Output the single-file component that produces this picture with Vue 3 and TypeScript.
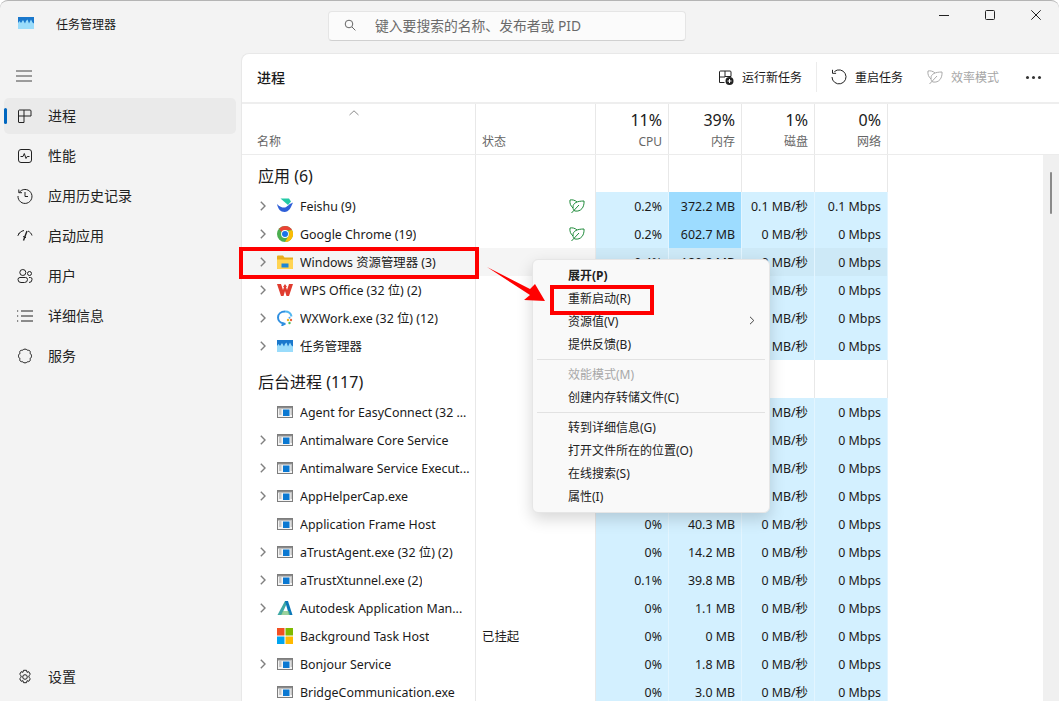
<script setup lang="ts">
interface Row { name: string; exp: boolean; icon: string; status?: string; leaf?: boolean; cpu: string; mem: string; disk: string; net: string; hot?: boolean; hover?: boolean }
const apps: Row[] = [
  { name: 'Feishu (9)', exp: true, icon: 'feishu', leaf: true, cpu: '0.2%', mem: '372.2 MB', disk: '0.1 MB/秒', net: '0.1 Mbps', hot: true },
  { name: 'Google Chrome (19)', exp: true, icon: 'chrome', leaf: true, cpu: '0.2%', mem: '602.7 MB', disk: '0 MB/秒', net: '0 Mbps', hot: true },
  { name: 'Windows 资源管理器 (3)', exp: true, icon: 'folder', cpu: '0.4%', mem: '189.8 MB', disk: '0 MB/秒', net: '0 Mbps', hover: true },
  { name: 'WPS Office (32 位) (2)', exp: true, icon: 'wps', cpu: '', mem: '', disk: '0 MB/秒', net: '0 Mbps' },
  { name: 'WXWork.exe (32 位) (12)', exp: true, icon: 'wx', cpu: '', mem: '', disk: '0 MB/秒', net: '0 Mbps' },
  { name: '任务管理器', exp: true, icon: 'tm', cpu: '', mem: '', disk: '0 MB/秒', net: '0 Mbps' },
]
const bg: Row[] = [
  { name: 'Agent for EasyConnect (32 ...', exp: false, icon: 'app', cpu: '', mem: '', disk: '0 MB/秒', net: '0 Mbps' },
  { name: 'Antimalware Core Service', exp: true, icon: 'app', cpu: '', mem: '', disk: '0 MB/秒', net: '0 Mbps' },
  { name: 'Antimalware Service Execut...', exp: true, icon: 'app', cpu: '', mem: '', disk: '0 MB/秒', net: '0 Mbps' },
  { name: 'AppHelperCap.exe', exp: true, icon: 'app', cpu: '', mem: '', disk: '0 MB/秒', net: '0 Mbps' },
  { name: 'Application Frame Host', exp: false, icon: 'app', cpu: '0%', mem: '40.3 MB', disk: '0 MB/秒', net: '0 Mbps' },
  { name: 'aTrustAgent.exe (32 位) (2)', exp: true, icon: 'app', cpu: '0%', mem: '14.2 MB', disk: '0 MB/秒', net: '0 Mbps' },
  { name: 'aTrustXtunnel.exe (2)', exp: true, icon: 'app', cpu: '0.1%', mem: '39.8 MB', disk: '0 MB/秒', net: '0 Mbps' },
  { name: 'Autodesk Application Man...', exp: true, icon: 'autodesk', cpu: '0%', mem: '1.1 MB', disk: '0 MB/秒', net: '0 Mbps' },
  { name: 'Background Task Host', exp: false, icon: 'ms', status: '已挂起', cpu: '0%', mem: '0 MB', disk: '0 MB/秒', net: '0 Mbps' },
  { name: 'Bonjour Service', exp: true, icon: 'app', cpu: '0%', mem: '1.8 MB', disk: '0 MB/秒', net: '0 Mbps' },
  { name: 'BridgeCommunication.exe', exp: false, icon: 'app', cpu: '0%', mem: '3.0 MB', disk: '0 MB/秒', net: '0 Mbps' },
]
const groups = [
  { title: '应用 (6)', rows: apps },
  { title: '后台进程 (117)', rows: bg },
]
const nav = [
  { id: 'proc', label: '进程', active: true },
  { id: 'perf', label: '性能' },
  { id: 'hist', label: '应用历史记录' },
  { id: 'boot', label: '启动应用' },
  { id: 'user', label: '用户' },
  { id: 'detail', label: '详细信息' },
  { id: 'svc', label: '服务' },
]
const heads = [
  { pct: '11%', label: 'CPU' },
  { pct: '39%', label: '内存' },
  { pct: '1%', label: '磁盘' },
  { pct: '0%', label: '网络' },
]
const menu = [
  [{ t: '展开(P)', bold: true }, { t: '重新启动(R)' }, { t: '资源值(V)', sub: true }, { t: '提供反馈(B)' }],
  [{ t: '效能模式(M)', off: true }, { t: '创建内存转储文件(C)' }],
  [{ t: '转到详细信息(G)' }, { t: '打开文件所在的位置(O)' }, { t: '在线搜索(S)' }, { t: '属性(I)' }],
]
</script>

<template>
  <div class="win">
    <header class="titlebar">
      <div class="brand">
        <svg class="tm-logo" width="16" height="12" viewBox="0 0 16 12">
          <rect width="16" height="12" fill="#9adcfb" />
          <path d="M0 0h16v6.500l-1.500-1-1.500-3-2 4-1.500-4-1.500 1.500L7 6.500 5 3 3 6 1.500 4 0 6z" fill="#1a78cc" />
        </svg>
        <span class="app-name">任务管理器</span>
      </div>
      <div class="search">
        <svg width="12" height="12" viewBox="0 0 12 12" fill="none" stroke="#666" stroke-width="1"><circle cx="5" cy="5" r="3.800" /><path d="M8 8l3.400 3.400" /></svg>
        <span>键入要搜索的名称、发布者或 PID</span>
      </div>
      <div class="winbtns">
        <svg width="10" height="10" viewBox="0 0 10 10" stroke="#222" fill="none"><path d="M0 5.500h10" /></svg>
        <svg width="10" height="10" viewBox="0 0 10 10" stroke="#222" fill="none"><rect x=".5" y=".5" width="9" height="9" rx="1" /></svg>
        <svg width="10" height="10" viewBox="0 0 10 10" stroke="#222" fill="none"><path d="M.3.3l9.400 9.400M9.700.3L.3 9.700" /></svg>
      </div>
    </header>

    <div class="body">
      <aside class="side">
        <button class="ham"><svg width="16" height="12" viewBox="0 0 16 12" stroke="#444" fill="none"><path d="M0 1h16M0 6h16M0 11h16" /></svg></button>
        <nav class="nav">
          <div v-for="n in nav" :key="n.id" class="nav-item" :class="{ active: n.active }">
            <i v-if="n.active" class="pip"></i>
            <svg class="nav-ico" width="16" height="16" viewBox="0 0 16 16" fill="none" stroke="#222" stroke-width="1">
              <template v-if="n.id === 'proc'">
                <path d="M1.500 8V14a.5.5 0 0 0 .5.5H7V2H2.500a1 1 0 0 0-1 1V8H14V3a1 1 0 0 0-1-1H7" />
              </template>
              <template v-else-if="n.id === 'perf'">
                <rect x="1.500" y="1.500" width="13" height="13" rx="2.500" /><path d="M3.500 8.500H6l1.300-3 1.700 5 1.200-2H12.500" />
              </template>
              <template v-else-if="n.id === 'hist'">
                <path d="M2.200 4.500A7 7 0 1 1 1 8" /><path d="M1.800 1.500v3.200H5M8 4v4.500h3" />
              </template>
              <template v-else-if="n.id === 'boot'">
                <path d="M1 7.500C2 5 4 3 7 2.500M11 3c2 1 3.500 2.500 4 4.500M1 7.500l1.500-2.800" /><path d="M6.500 12.500L10 3" stroke-width="1.400" /><path d="M6 8.500l3 1.200" />
              </template>
              <template v-else-if="n.id === 'user'">
                <circle cx="5.800" cy="4.500" r="3" /><circle cx="12.500" cy="5.500" r="2" /><path d="M1 11.500a2 2 0 0 1 2-2h5.500a2 2 0 0 1 2 2v0a3 3 0 0 1-3 3H4a3 3 0 0 1-3-3zM12 9.500h1.500a1.500 1.500 0 0 1 1.500 1.500v.5a3 3 0 0 1-3 3" />
              </template>
              <template v-else-if="n.id === 'detail'">
                <path d="M4 3h12M4 8h12M4 13h12" /><path d="M.5 2.500v1M.5 7.500v1M.5 12.500v1" stroke-width="1.400" />
              </template>
              <template v-else>
                <path d="M6 2C6.500.8 9.500.8 10 2C11 2.500 12.500 2 13 3C13.500 4 13.200 5 13 5.500C15 6 15 10 13 10.500C13.200 11 13.500 12 13 13C12.500 14 11 13.500 10 14C9.500 15.200 6.500 15.200 6 14C5 13.500 3.500 14 3 13C2.500 12 2.800 11 3 10.500C1 10 1 6 3 5.500C2.800 5 2.500 4 3 3C3.500 2 5 2.500 6 2Z" />
              </template>
            </svg>
            <span>{{ n.label }}</span>
          </div>
        </nav>
        <div class="nav-item settings">
          <svg class="nav-ico" width="16" height="16" viewBox="0 0 16 16" fill="none" stroke="#222"><circle cx="8" cy="8" r="2.300" /><path d="M6.500 1.300h3l.5 2 1.800-.6 1.500 2.600-1.400 1.400v1.600l1.400 1.400-1.500 2.600-1.800-.6-.5 2h-3l-.5-2-1.800.6-1.500-2.600 1.400-1.400V6.700L2.700 5.300l1.500-2.600 1.800.6z" /></svg>
          <span>设置</span>
        </div>
      </aside>

      <main class="panel">
        <div class="toolbar">
          <h1>进程</h1>
          <div class="tools">
            <div class="tool">
              <svg width="16" height="16" viewBox="0 0 16 16" fill="none" stroke="#222"><path d="M1.500 8V13.500H6.500M1.500 8V3a1 1 0 0 1 1-1H7V8H1.500M7 2h5a1 1 0 0 1 1 1v4.500H7" /><circle cx="11.500" cy="12" r="4" fill="#222" stroke="none" /><path d="M11.500 10v4M9.500 12h4" stroke="#fff" /></svg>
              <span>运行新任务</span>
            </div>
            <i class="tsep"></i>
            <div class="tool">
              <svg width="16" height="16" viewBox="0 0 16 16" fill="none" stroke="#222"><path d="M3.400 2.600A7 7 0 1 1 1 8" /><path d="M1.500.8v3.500h3.600" /></svg>
              <span>重启任务</span>
            </div>
            <div class="tool off">
              <svg width="16" height="16" viewBox="0 0 16 16" fill="none" stroke="#aaa"><path d="M8 4C6 2 3 1.500 1 2C.5 5 1.500 8 4 10" /><path d="M4 9C4 5 8 3 15 3C15.500 9 12 14 6 13C4.500 12.500 4 11 4 9Z" /><path d="M2.500 15L10 7" /></svg>
              <span>效率模式</span>
            </div>
            <div class="more"><i></i><i></i><i></i></div>
          </div>
        </div>

        <div class="table">
          <div class="thead grid">
            <div class="th name">
              <svg class="caret" width="10" height="6" viewBox="0 0 10 6" fill="none" stroke="#8a8a8a"><path d="M.5 5L5 .8 9.500 5" /></svg>
              <span class="lab">名称</span>
            </div>
            <div class="th status"><span class="lab">状态</span></div>
            <div v-for="h in heads" :key="h.label" class="th num">
              <span class="pct">{{ h.pct }}</span>
              <span class="lab">{{ h.label }}</span>
            </div>
            <div class="fill"></div>
          </div>

          <template v-for="g in groups" :key="g.title">
            <div class="group grid">
              <div class="gname">{{ g.title }}</div>
              <div></div><div></div><div></div><div></div><div></div><div class="fill"></div>
            </div>
            <div v-for="r in g.rows" :key="r.name" class="row grid" :class="{ hover: r.hover }">
              <div class="cell name">
                <svg v-if="r.exp" class="chev" width="8" height="10" viewBox="0 0 8 10" fill="none" stroke="#808080" stroke-width="1.400"><path d="M1.800.8L6 5 1.800 9.200" /></svg>
                <svg class="pico" width="16" height="16" viewBox="0 0 16 16">
                  <template v-if="r.icon === 'app'">
                    <rect x=".5" y="2.500" width="15" height="11" fill="#f4f4f4" stroke="#7d7d7d" />
                    <rect x="1" y="3" width="14" height="1.500" fill="#8a8a8a" />
                    <rect x="6" y="5.500" width="6.500" height="6.500" fill="#0a78d2" />
                    <path d="M2 6h2.500M2 8h2.500M2 10h2.500M13.500 6H15M13.500 8H15M13.500 10H15" stroke="#9a9a9a" />
                  </template>
                  <template v-else-if="r.icon === 'feishu'">
                    <path d="M3.500.5h8.500l2 3-3 3.500z" fill="#24c9a6" />
                    <path d="M0 6c3 3 6 4 8 3.500s4-3.500 8-5c-2 5-4 9.500-8.500 9.500C3.500 14 1 11 0 6z" fill="#2f5fd8" />
                  </template>
                  <template v-else-if="r.icon === 'chrome'">
                    <circle cx="8" cy="8" r="8" fill="#4caf50" />
                    <path d="M8 0a8 8 0 0 1 7 4H8a4 4 0 0 0-3.500 2L2 2.800A8 8 0 0 1 8 0z" fill="#ea4335" />
                    <path d="M15 4a8 8 0 0 1-7 12l3.500-6A4 4 0 0 0 11 5z" fill="#fbbc05" />
                    <circle cx="8" cy="8" r="3.900" fill="#fff" /><circle cx="8" cy="8" r="3" fill="#1a73e8" />
                  </template>
                  <template v-else-if="r.icon === 'folder'">
                    <path d="M0 2.500a1 1 0 0 1 1-1h5l1.500 2H16V14a1 1 0 0 1-1 1H1a1 1 0 0 1-1-1z" fill="#e8ae1e" />
                    <path d="M0 5.500h16V14a1 1 0 0 1-1 1H1a1 1 0 0 1-1-1z" fill="#ffd453" />
                    <rect x="4.500" y="9.500" width="7" height="4" fill="#1c86d8" />
                  </template>
                  <template v-else-if="r.icon === 'wps'">
                    <path d="M0 2h4l2 6 1-3H6L8 2l2 3H9l1 3 2-6h4l-4 12H9.500L8 9l-1.500 5H4z" fill="#e03c2f" />
                  </template>
                  <template v-else-if="r.icon === 'wx'">
                    <path d="M8 1.500c-4 0-7 2.500-7 6 0 3 2.500 5.300 5 5.700l-.5 1.800 3-1.700" fill="none" stroke="#2f8fe0" stroke-width="2" />
                    <path d="M8 1.500c3.500 0 6 2.200 6.500 5" fill="none" stroke="#53b7f0" stroke-width="2" />
                    <circle cx="11" cy="10" r="1.200" fill="#f2b51d" /><circle cx="14" cy="10" r="1.200" fill="#e9653b" /><circle cx="12.500" cy="13" r="1.200" fill="#4cbf5a" /><circle cx="12.500" cy="7.800" r="1" fill="#4da6f0" />
                  </template>
                  <template v-else-if="r.icon === 'tm'">
                    <rect y="2" width="16" height="12" fill="#9adcfb" />
                    <path d="M0 2h16v6.500l-1.500-1-1.500-3-2 4-1.500-4-1.500 1.500L7 8.500 5 5 3 8 1.500 6 0 8z" fill="#1a78cc" />
                  </template>
                  <template v-else-if="r.icon === 'autodesk'">
                    <path d="M.5 15L8 1h3L4.500 15z" fill="#3fa9a5" />
                    <path d="M8 1h3l4.500 14H12z" fill="#0b78b8" />
                    <path d="M4 15l2-4h6l1 4z" fill="#6fbf73" opacity=".7" />
                  </template>
                  <template v-else>
                    <rect width="7.500" height="7.500" fill="#f25022" /><rect x="8.500" width="7.500" height="7.500" fill="#7fba00" />
                    <rect y="8.500" width="7.500" height="7.500" fill="#00a4ef" /><rect x="8.500" y="8.500" width="7.500" height="7.500" fill="#ffb900" />
                  </template>
                </svg>
                <span class="pname">{{ r.name }}</span>
              </div>
              <div class="cell status">
                <span>{{ r.status }}</span>
                <svg v-if="r.leaf" class="leaf" width="16" height="16" viewBox="0 0 16 16" fill="none" stroke="#1f8a3a"><path d="M8 4C6 2 3 1.500 1 2C.5 5 1.500 8 4 10" /><path d="M4 9C4 5 8 3 15 3C15.500 9 12 14 6 13C4.500 12.500 4 11 4 9Z" /><path d="M2.500 15L10 7" /></svg>
              </div>
              <div class="cell val">{{ r.cpu }}</div>
              <div class="cell val" :class="{ hot: r.hot }">{{ r.mem }}</div>
              <div class="cell val">{{ r.disk }}</div>
              <div class="cell val">{{ r.net }}</div>
              <div class="fill"></div>
            </div>
          </template>

          <div class="scrollbar"><i></i></div>
        </div>
      </main>
    </div>

    <div class="ctx">
      <template v-for="(sec, i) in menu" :key="i">
        <hr v-if="i > 0" />
        <div v-for="m in sec" :key="m.t" class="ctx-item" :class="{ bold: m.bold, off: m.off }">
          <span>{{ m.t }}</span>
          <svg v-if="m.sub" width="6" height="9" viewBox="0 0 6 9" fill="none" stroke="#444"><path d="M1 .8L4.800 4.500 1 8.200" /></svg>
        </div>
      </template>
    </div>

    <i class="mark mark-row"></i>
    <i class="mark mark-menu"></i>
    <svg class="arrow" width="60" height="36" viewBox="0 0 60 36"><path d="M0 0L43 22 48 17 58 34 37 33 43 28z" fill="#f00" /></svg>
  </div>
</template>

<style>
html, body { margin: 0; background: #fff; }
</style>

<style scoped>
.win {
  position: relative;
  width: 1059px;
  height: 701px;
  overflow: hidden;
  background: #f3f3f3;
  border-top: 1px solid #b4b4b4;
  border-radius: 8px 8px 0 0;
  box-sizing: border-box;
  font-family: "Noto Sans", "Noto Sans CJK SC", sans-serif;
  font-size: 12px;
  color: #1a1a1a;
}
.titlebar {
  height: 52px;
  display: flex;
  align-items: flex-start;
}
.brand { width: 328px; display: flex; align-items: center; padding: 16px 0 0 18px; box-sizing: border-box; }
.tm-logo { margin-right: 22px; margin-top: -4px; }
.app-name { font-size: 12px; line-height: 16px; margin-top: 0; }
.search {
  width: 358px;
  height: 30px;
  margin-top: 10px;
  box-sizing: border-box;
  border: 1px solid #e5e5e5;
  border-bottom-color: #d0d0d0;
  border-radius: 4px;
  background: #fbfbfb;
  display: flex;
  align-items: center;
  padding: 0 0 2px 15px;
  gap: 19px;
  color: #6a6a6a;
  font-size: 13.800px;
}
.winbtns { flex: 1; display: flex; justify-content: flex-end; gap: 36px; padding: 9px 18px 0 0; }
.body { display: flex; height: 648px; }
.side { width: 241px; flex: none; display: flex; flex-direction: column; padding: 0 4px; box-sizing: border-box; }
.ham { border: 0; background: none; padding: 0 0 0 12px; height: 45px; text-align: left; display: flex; align-items: center; }
.nav { display: flex; flex-direction: column; gap: 4px; width: 232px; }
.nav-item { position: relative; height: 36px; display: flex; align-items: center; padding-left: 13px; gap: 15px; border-radius: 5px; font-size: 14px; color: #222; }
.nav-item span { margin-top: -2px; }
.nav-item.active { background: #eaeaea; }
.pip { position: absolute; left: 0; top: 10px; width: 3px; height: 16px; border-radius: 2px; background: #0067c0; }
.settings { margin-top: auto; margin-bottom: 6px; }
.panel { flex: 1; min-width: 0; background: #fff; border-radius: 8px 0 0 0; border-top: 1px solid #e8e8e8; border-left: 1px solid #e8e8e8; box-sizing: border-box; display: flex; flex-direction: column; overflow: hidden; }
.toolbar { height: 50px; flex: none; box-sizing: border-box; display: flex; align-items: center; padding: 0 0 2px 15px; border-bottom: 2px solid #eee; }
h1 { margin: 0; font-size: 14px; font-weight: 500; }
.tools { margin-left: auto; display: flex; align-items: center; height: 30px; }
.tool { display: flex; align-items: center; gap: 8px; font-size: 12px; }
.tool:first-child { margin-right: 14px; }
.tool.off { color: #a6a6a6; margin-left: 24px; }
.tsep { width: 1px; height: 30px; background: #ececec; margin-right: 14px; }
.more { display: flex; gap: 3px; margin: 0 18px 0 27px; }
.more i { width: 3px; height: 3px; border-radius: 50%; background: #333; }
.table { position: relative; flex: 1; overflow: hidden; }
.grid { display: grid; grid-template-columns: 234px 120px 73px 73px 73px 73px 1fr; }
.thead { position: relative; z-index: 1; height: 50px; box-shadow: 0 1px 0 #ececec; background: #fff; }
.th { position: relative; border-right: 1px solid #e8e8e8; box-sizing: border-box; display: flex; flex-direction: column; justify-content: flex-end; }
.th .lab { color: #666; font-size: 12px; line-height: 16px; margin-bottom: 4px; }
.th.name { padding-left: 15px; }
.th.status { padding-left: 6px; }
.th.num { align-items: flex-end; padding-right: 6px; }
.pct { font-size: 16px; line-height: 20px; margin-bottom: 4px; }
.caret { position: absolute; left: 107px; top: 6px; }
.group { height: 38px; }
.group > div { border-right: 1px solid #e8e8e8; }
.group > .fill { border: 0; }
.gname { font-size: 16px; line-height: 20px; padding: 12px 0 0 16px; }
.row { height: 28px; }
.cell { display: flex; align-items: center; box-sizing: border-box; min-width: 0; font-size: 12.400px; white-space: nowrap; }
.cell.name { position: relative; padding-left: 35px; gap: 7px; border-right: 1px solid #e8e8e8; }
.chev { position: absolute; left: 17px; top: 9px; }
.pico { flex: none; }
.pname { overflow: hidden; }
.cell.status { padding-left: 6px; justify-content: space-between; padding-right: 10px; border-right: 1px solid #e8e8e8; }
.cell.val { justify-content: flex-end; padding-right: 6px; background: #d3f0ff; border-right: 1px solid #e3f5ff; }
.cell.val.hot { background: #9ddcff; }
.row.hover .cell.name, .row.hover .cell.status { background: #f5f5f5; }
.row.hover .cell.val { background: #cde9f7; }
.scrollbar { position: absolute; z-index: 2; top: 51px; right: 0; bottom: 0; width: 16px; background: #f0f0f0; }
.scrollbar i { position: absolute; left: 7px; top: 17px; width: 2px; height: 42px; background: #8a8a8a; border-radius: 1px; }

.ctx {
  position: absolute;
  left: 532px;
  top: 258px;
  width: 238px;
  box-sizing: border-box;
  padding: 4px 0 4px;
  background: #f9f9f9;
  border: 1px solid #e6e6e6;
  border-radius: 6px;
  box-shadow: 0 6px 16px rgba(0, 0, 0, .16);
}
.ctx-item { height: 23px; box-sizing: border-box; display: flex; align-items: center; justify-content: space-between; padding: 0 14px 2px 35px; font-size: 12px; color: #222; }
.ctx-item.bold { font-weight: 700; }
.ctx-item.off { color: #a8a8a8; }
.ctx hr { margin: 3px 4px; border: 0; border-top: 1px solid #e2e2e2; height: 0; }
.mark { position: absolute; border: 4px solid #f00; box-sizing: border-box; }
.mark-row { left: 239px; top: 246px; width: 240px; height: 32px; }
.mark-menu { left: 550px; top: 284px; width: 104px; height: 30px; }
.arrow { position: absolute; left: 487px; top: 266px; }
</style>
